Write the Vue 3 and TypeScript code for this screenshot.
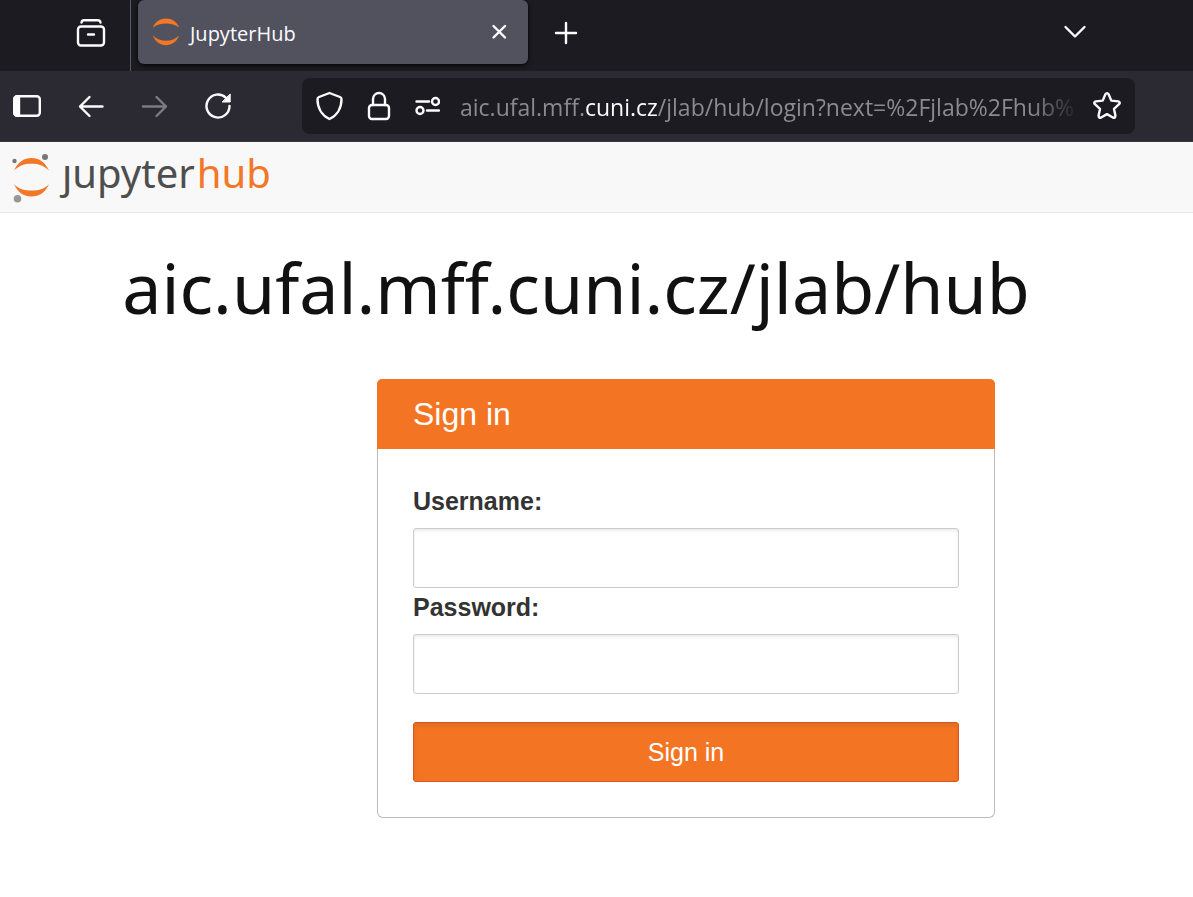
<script setup lang="ts">
import { ref } from 'vue'

const address = ref('aic.ufal.mff.cuni.cz/jlab/hub/login?next=%2Fjlab%2Fhub%')
const editing = ref(false)
const username = ref('')
const password = ref('')
</script>

<template>
  <div class="window">
    <div class="tabs">
      <div class="tools">
        <button type="button" class="icon" aria-label="Recent browsing">
          <svg width="30" height="30" viewBox="0 0 30 30">
            <rect x="2" y="8.500" width="26" height="19" rx="3" />
            <path d="M5.500 4.500Q6 2.200 8 2.200H22Q24 2.200 24.500 4.500M12 16.500H18" />
          </svg>
        </button>
      </div>
      <div class="tab">
        <svg class="planet" width="28" height="28" viewBox="0 0 28 28">
          <path d="M.800 9.600C3.500 3.500 8.300.600 14 .600S24.500 3.500 27.200 9.600C23.500 6.700 19 5.400 14 5.400S4.500 6.700.800 9.600Z" />
          <path d="M.800 17.600C4.500 21.200 9 22.800 14 22.800S23.500 21.200 27.200 17.600C24.500 24.300 19.700 27.200 14 27.200S3.500 24.300.800 17.600Z" />
        </svg>
        <span class="tab-title">JupyterHub</span>
        <button type="button" class="icon" aria-label="Close tab">
          <svg width="16" height="16" viewBox="0 0 16 16"><path d="M2.500 2L14 13.500M14 2L2.500 13.500" /></svg>
        </button>
      </div>
      <button type="button" class="icon new-tab" aria-label="New tab">
        <svg width="24" height="24" viewBox="0 0 24 24"><path d="M12 2V22M2 12H22" /></svg>
      </button>
      <button type="button" class="icon all-tabs" aria-label="List all tabs">
        <svg width="24" height="16" viewBox="0 0 24 16"><path d="M2.500 3L12 12.500L21.500 3" /></svg>
      </button>
    </div>

    <div class="toolbar">
      <div class="nav">
        <button type="button" class="icon" aria-label="Sidebar">
          <svg width="28" height="28" viewBox="0 0 28 28">
            <rect x="1.200" y="4.200" width="25.600" height="19.600" rx="3" />
            <path class="solid" d="M3 4.500H6V23.500H3L1.500 22V6Z" />
          </svg>
        </button>
        <button type="button" class="icon" aria-label="Back">
          <svg width="28" height="28" viewBox="0 0 28 28"><path d="M25.500 14.500H3M12.500 5L3 14.500L12.500 24" /></svg>
        </button>
        <button type="button" class="icon" aria-label="Forward" disabled>
          <svg width="28" height="28" viewBox="0 0 28 28"><path d="M2 14.500H25M15.500 5L25 14.500L15.500 24" /></svg>
        </button>
        <button type="button" class="icon" aria-label="Reload">
          <svg width="28" height="28" viewBox="0 0 28 28">
            <path d="M24.500 14A11.500 11.500 0 1 1 21 5.800" />
            <path class="fill" d="M25.200 2.300V10H17.500Z" />
          </svg>
        </button>
      </div>
      <div class="urlbar">
        <button type="button" class="icon" aria-label="Tracking protection">
          <svg width="28" height="30" viewBox="0 0 28 30">
            <path d="M13.500 2L24 6Q25.500 6.600 25.500 8.200C25.500 17 21 24.500 13.500 28C6 24.500 1.500 17 1.500 8.200Q1.500 6.600 3 6Z" />
          </svg>
        </button>
        <button type="button" class="icon" aria-label="Site security">
          <svg width="24" height="30" viewBox="0 0 24 30">
            <rect x="2" y="14" width="20" height="14" rx="3" />
            <path d="M6 14V8A6 6 0 0 1 18 8V14" />
          </svg>
        </button>
        <button type="button" class="icon" aria-label="Site permissions">
          <svg width="26" height="20" viewBox="0 0 26 20">
            <circle cx="21.500" cy="5.500" r="3.500" />
            <circle cx="6" cy="14.500" r="3.500" />
            <path d="M2.500 5.500H15M13 14.500H25" />
          </svg>
        </button>
        <label class="address">
          <span v-show="!editing" class="shown">aic.ufal.mff.<b>cuni.cz</b>/jlab/hub/login?next=%2Fjlab%2Fhub%</span>
          <input v-model="address" type="text" aria-label="Address" @focus="editing = true" @blur="editing = false" />
        </label>
        <button type="button" class="icon" aria-label="Bookmark this page">
          <svg width="30" height="30" viewBox="0 0 30 30">
            <path d="M13.400 3.300Q15 1 16.600 3.300L19.300 9.600L26.200 10.400Q28.800 11.200 27.100 13.200L22 17.900L23.400 24.600Q23.400 27.300 20.900 26.500L15 23.100L9.100 26.500Q6.600 27.300 6.600 24.600L8 17.900L2.900 13.200Q1.200 11.200 3.800 10.400L10.700 9.600Z" />
          </svg>
        </button>
      </div>
    </div>

    <header class="site">
      <a href="#" class="brand">
        <svg width="40" height="52" viewBox="0 0 40 52">
          <g class="orange">
            <path d="M2 18.500C5.500 10.500 12 6 19.500 6S33.500 10.500 37 18.500C32 13.700 26.500 11.800 19.500 11.800S7 13.700 2 18.500Z" />
            <path d="M2 32.200C7 37 12.500 38.600 19.500 38.600S32 37 37 32.200C33.500 40.200 27 44.500 19.500 44.500S5.500 40.200 2 32.200Z" />
          </g>
          <circle cx="2.500" cy="9" r="2.200" fill="#767677" />
          <circle cx="33" cy="5" r="3" fill="#767677" />
          <circle cx="5.500" cy="46.800" r="3.800" fill="#989798" />
        </svg>
        <span class="wordmark">ȷupyter<span class="hub">hub</span></span>
      </a>
    </header>

    <main>
      <h1>aic.ufal.mff.cuni.cz/jlab/hub</h1>
      <form class="panel" @submit.prevent>
        <h2>Sign in</h2>
        <div class="fields">
          <label for="username">Username:</label>
          <input id="username" v-model="username" type="text" autocomplete="username" />
          <label for="password">Password:</label>
          <input id="password" v-model="password" type="password" autocomplete="current-password" />
          <button type="submit">Sign in</button>
        </div>
      </form>
    </main>
  </div>
</template>

<style>
body {
  margin: 0;
  background: #fff;
}
</style>

<style scoped>
* {
  box-sizing: border-box;
}

.window {
  font-family: "Liberation Sans", Arial, sans-serif;
}

.tabs,
.toolbar {
  display: flex;
  height: 71px;
  color: #fbfbfe;
  font-family: "Open Sans", "Noto Sans", sans-serif;
}

.tabs {
  background: #1c1b22;
}

.toolbar {
  align-items: center;
  background: #2b2a33;
  border-bottom: 1px solid #38373f;
  padding-right: 58px;
}

.icon {
  display: flex;
  flex: none;
  padding: 0;
  border: 0;
  background: none;
  color: inherit;
}

.icon:disabled {
  color: #7c7b82;
}

.icon svg {
  fill: none;
  stroke: currentColor;
  stroke-width: 2.4;
  stroke-linecap: round;
  stroke-linejoin: round;
}

.icon .solid {
  fill: currentColor;
}

.icon .fill {
  fill: currentColor;
  stroke-width: 1;
}

.tools {
  display: flex;
  align-items: center;
  justify-content: flex-end;
  width: 131px;
  padding: 0 24px 6px 0;
  border-right: 1px solid #5b5a62;
}

.tab {
  display: flex;
  align-items: center;
  width: 390px;
  height: 64px;
  margin-left: 7px;
  padding: 0 21px 0 14px;
  border-radius: 6px;
  background: #52525e;
  box-shadow: 0 1px 4px #000;
}

.planet {
  flex: none;
  fill: #f37726;
}

.tab-title {
  flex: 1;
  margin-left: 10px;
  padding-top: 3px;
  font-size: 20px;
  line-height: 28px;
}

.new-tab {
  align-items: center;
  height: 66px;
  margin-left: 26px;
}

.all-tabs {
  align-items: center;
  height: 64px;
  margin-left: auto;
  margin-right: 106px;
}

.nav {
  display: flex;
  gap: 36px;
  padding-left: 13px;
}

.urlbar {
  display: flex;
  align-items: center;
  flex: 1;
  min-width: 0;
  height: 56px;
  margin-left: 69px;
  padding: 0 13px 0 14px;
  border-radius: 8px;
  background: #1c1b22;
}

.urlbar .icon + .icon {
  margin-left: 23px;
}

.address {
  display: grid;
  flex: 1;
  min-width: 0;
  margin: 0 12px 0 20px;
  padding-top: 2px;
  font-size: 23px;
  line-height: 36px;
}

.address > * {
  grid-area: 1 / 1;
  min-width: 0;
}

.shown {
  overflow: hidden;
  color: #8b8a90;
  white-space: nowrap;
  mask-image: linear-gradient(to left, transparent, #000 48px);
}

.shown b {
  color: #fbfbfe;
  font-weight: 400;
}

.address input {
  width: 100%;
  padding: 0;
  border: 0;
  outline: 0;
  background: none;
  color: #fbfbfe;
  font: inherit;
  opacity: 0;
}

.address input:focus {
  opacity: 1;
}

.site {
  display: flex;
  height: 71px;
  padding: 10px 12px;
  border-bottom: 1px solid #e7e7e7;
  background: #f8f8f8;
}

.brand {
  display: flex;
  text-decoration: none;
}

.orange {
  fill: #f37726;
}

.wordmark {
  margin-left: 10px;
  color: #4e4e4e;
  font-family: "Noto Sans", sans-serif;
  font-size: 40px;
  line-height: 42px;
}

.hub {
  margin-left: 2px;
  color: #f37726;
}

main {
  display: flow-root;
}

h1 {
  margin: 0;
  padding: 32px 41px 0 0;
  color: #111;
  font-family: "Noto Sans", sans-serif;
  font-size: 70px;
  font-weight: 400;
  line-height: 84px;
  text-align: center;
}

.panel {
  width: 618px;
  max-width: 100%;
  margin: 50px 198px 79px auto;
  border: 1px solid #bbb;
  border-top: 0;
  border-radius: 6px;
}

h2 {
  margin: 0 -1px;
  padding: 0 36px;
  border-radius: 5px 5px 0 0;
  background: #f37524;
  color: #fff;
  font-size: 32px;
  font-weight: 400;
  line-height: 70px;
}

.fields {
  display: flex;
  flex-direction: column;
  padding: 33px 35px 35px;
}

.fields label {
  margin-bottom: 8px;
  color: #333;
  font-size: 25px;
  font-weight: 700;
  line-height: 38px;
}

.fields input {
  height: 60px;
  padding: 0 20px;
  border: 1px solid #ccc;
  border-radius: 3px;
  background: #fff;
  box-shadow: inset 0 2px 3px rgba(0, 0, 0, .08);
  font: inherit;
  font-size: 25px;
}

.fields button {
  height: 60px;
  margin-top: 28px;
  border: 1px solid #e34f21;
  border-radius: 3px;
  background: #f37524;
  box-shadow: inset 0 3px 4px rgba(0, 0, 0, .08);
  color: #fff;
  font: inherit;
  font-size: 25px;
}
</style>
